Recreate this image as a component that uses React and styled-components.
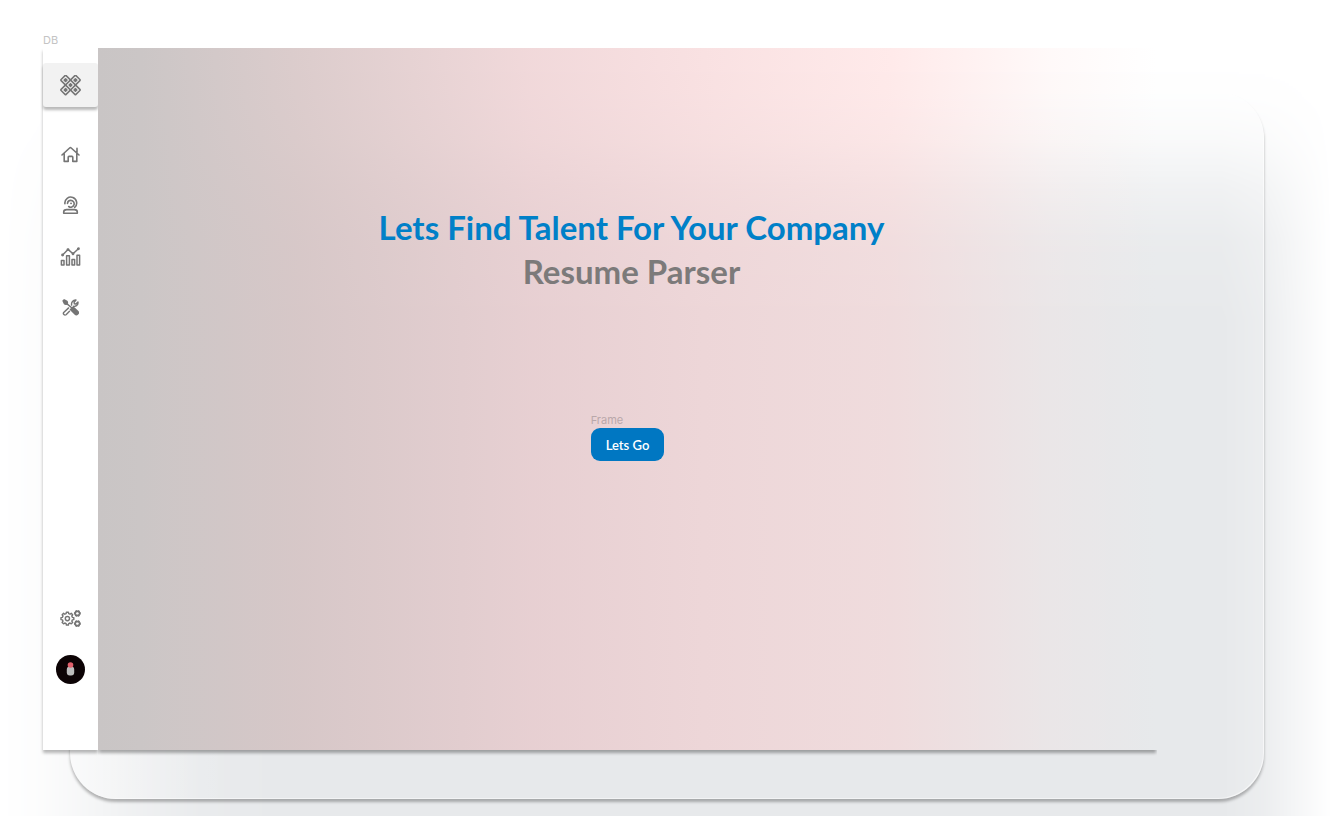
import React from "react";
import styled, { createGlobalStyle } from "styled-components";

const GlobalStyle = createGlobalStyle`
  *, *::before, *::after { box-sizing: border-box; }
  body { margin: 0; background: #fff; font-family: Lato, "Liberation Sans", sans-serif; }
`;

const Stage = styled.div`
  display: grid;
  grid-template: minmax(100vh, auto) / minmax(0, 1fr);
  overflow: hidden;
  & > * { grid-area: 1 / 1; isolation: isolate; }
`;

const Haze = styled.div`
  background: #e7e9eb;
  mask-image:
    linear-gradient(to right, transparent 0, rgba(0, 0, 0, 0.1) 36px, rgba(0, 0, 0, 0.34) 80px, rgba(0, 0, 0, 0.64) 130px, rgba(0, 0, 0, 0.9) 200px, #000 280px, #000 calc(100% - 110px), rgba(0, 0, 0, 0.8) calc(100% - 68px), rgba(0, 0, 0, 0.35) calc(100% - 30px), transparent 100%),
    linear-gradient(to bottom, transparent 60px, rgba(0, 0, 0, 0.07) 100px, rgba(0, 0, 0, 0.25) 140px, rgba(0, 0, 0, 0.62) 190px, rgba(0, 0, 0, 0.88) 240px, #000 320px);
  mask-composite: intersect;
`;

const GlassCard = styled.div`
  margin: 92px 68px 17px 70px;
  border-radius: 46px;
  background: linear-gradient(to right, rgba(255, 255, 255, 0.3), rgba(255, 255, 255, 0) 160px);
  box-shadow:
    0 3px 3px rgba(0, 0, 0, 0.28),
    inset -1px -1px 0 rgba(255, 255, 255, 0.5);
`;

const Screen = styled.div`
  display: flex;
  flex-direction: column;
  margin: 32px 175px 66px 43px;
`;

const FrameLabel = styled.span`
  font: 400 11px/16px Inter, sans-serif;
  color: ${(p) => p.$color};
`;

const Board = styled.div`
  flex: 1;
  display: flex;
`;

const Sidebar = styled.aside`
  flex: none;
  display: flex;
  flex-direction: column;
  width: 55px;
  padding: 15px 0 55px;
  background: #fff;
  box-shadow: 0 3px 3px rgba(0, 0, 0, 0.28);
`;

const Nav = styled.nav`
  display: flex;
  flex-direction: column;
  margin-top: ${(p) => (p.$end ? "auto" : "22px")};
`;

const IconButton = styled.button`
  display: flex;
  align-items: center;
  justify-content: center;
  width: 100%;
  height: 51px;
  padding: 0;
  border: 0;
  background: none;
  color: #757575;
  cursor: pointer;
`;

const LogoButton = styled(IconButton)`
  height: 44px;
  border-radius: 3px;
  background: #f2f2f2;
  box-shadow: 0 3px 3px rgba(0, 0, 0, 0.28);
`;

const Icon = styled.svg.attrs({ "aria-hidden": true })`
  display: block;
  fill: none;
  stroke: currentColor;
  stroke-width: ${(p) => p.$stroke || 1.6};
  stroke-linecap: round;
  stroke-linejoin: round;
`;

const Main = styled.main`
  flex: 1;
  display: flex;
  flex-direction: column;
  align-items: center;
  gap: 119px;
  padding: 157px 16px 48px;
  background: linear-gradient(
    to right,
    rgb(201, 197, 197) 0,
    rgb(203, 198, 198) 4%,
    rgba(210, 190, 190, 0.78) 19%,
    rgba(231, 189, 192, 0.58) 41%,
    rgba(243, 195, 197, 0.5) 57%,
    rgba(255, 195, 195, 0.35) 75%,
    rgba(255, 210, 208, 0.13) 90%,
    rgba(255, 255, 255, 0) 100%
  );
  box-shadow: 0 4px 3px -1px rgba(0, 0, 0, 0.32);
  clip-path: inset(0 0 -8px 0);
`;

const Heading = styled.h1`
  margin: 0;
  padding-left: 8px;
  font-size: 33px;
  line-height: 44px;
  font-weight: 700;
  text-align: center;
  color: #0080c8;
`;

const Product = styled.span`
  display: block;
  color: #7c7a7a;
`;

const Action = styled.div`
  display: flex;
  flex-direction: column;
  align-items: flex-start;
`;

const PrimaryButton = styled.button`
  height: 33px;
  padding: 0 15px;
  border: 0;
  border-radius: 9px;
  background: #0077c2;
  color: #fff;
  font: 600 13px/16px Lato, sans-serif;
  cursor: pointer;
`;

const LogoIcon = () => (
  <Icon width="21" height="21" viewBox="-11 -10.5 22 22" $stroke={1.6}>
    <g transform="rotate(45)">
      <rect x="-11" y="-3.7" width="22" height="7.4" rx=".8" />
      <rect x="-3.7" y="-11" width="7.4" height="22" rx=".8" />
      {[[0, 0], [7.3, 0], [-7.3, 0], [0, 7.3], [0, -7.3]].map(([x, y]) => (
        <rect key={`${x},${y}`} x={x - 1} y={y - 1} width="2" height="2" fill="currentColor" />
      ))}
    </g>
  </Icon>
);

const HomeIcon = () => (
  <Icon width="19" height="17" viewBox="0 0 19 17">
    <path d="M1 9 8.6 2a1.2 1.2 0 0 1 1.6 0l7.8 7M3.2 7.6v7.8h4v-4.2a.8.8 0 0 1 .8-.8h3a.8.8 0 0 1 .8.8v4.2h4V7.6M16 6.4V2.4" />
  </Icon>
);

const PersonIcon = () => (
  <Icon width="17" height="19" viewBox="0 0 17 19">
    <path d="M2.9 7.6A5.9 5.9 0 1 1 12.7 11.4M5.5 7.4C5.7 5.4 6.9 4.4 8.7 4.4a3.4 3.4 0 1 1-2 6.1M8.9 7.4h.3" />
    <path d="M1.7 17.2v-1.2c0-1.5 1.2-2.4 3-2.4h7.6c1.8 0 3 .9 3 2.4v1.2Z" />
  </Icon>
);

const ChartIcon = () => (
  <Icon width="21" height="21" viewBox="0 0 21 21" $stroke={1.5}>
    <path d="M1.4 14.6h2.6v4.4H1.4ZM6.6 9.8h2.8V19H6.6ZM12 13.4h2.6V19H12ZM17 9.2h2.6V19H17ZM2.6 9 8 3.4l5 4.4 5.4-5" />
    <g fill="currentColor">
      <circle cx="2.6" cy="9" r=".7" />
      <circle cx="8" cy="3.6" r=".7" />
      <circle cx="13" cy="7.8" r=".7" />
      <circle cx="18.4" cy="2.8" r=".7" />
    </g>
  </Icon>
);

const ToolsIcon = () => (
  <Icon width="17" height="17" viewBox="0 0 18 18" $stroke={1.5}>
    <path d="M10.2 6.4C9.6 3.5 11.7.9 14.8 1.1l-2 2.4.3 1.6 1.6.3 2.2-2.2c.4 2.8-1.8 5-4.6 4.5M7 9.4l-5.2 4.8a1.8 1.8 0 0 0 2.5 2.5l3.6-3.7" />
    <path d="M1.2 2 2.4.9l2.9 1.5.5 1.8-1.5 1.5-1.7-.6ZM10.2 10l1.6-1.6 4.8 4.7a2 2 0 0 1-2.9 2.9l-4.8-4.8Z" fill="currentColor" />
    <path d="m5 4.9 5.6 4.7" />
  </Icon>
);

const gearPath = (cx, cy, inner, outer, teeth) => {
  const step = (Math.PI * 2) / teeth;
  const points = [];
  for (let i = 0; i < teeth; i += 1) {
    [[-0.32, inner], [-0.2, outer], [0.2, outer], [0.32, inner]].forEach(([t, r]) => {
      const a = (i + t) * step;
      points.push(`${(cx + r * Math.cos(a)).toFixed(2)} ${(cy + r * Math.sin(a)).toFixed(2)}`);
    });
  }
  return `M${points.join("L")}Z`;
};

const GearsIcon = () => (
  <Icon width="21" height="17" viewBox="0 0 21 17" $stroke={1.4}>
    <path d={gearPath(7.4, 8.6, 5.1, 6.5, 8)} />
    <circle cx="7.4" cy="8.6" r="2.1" />
    <path d={gearPath(17.4, 3.4, 1.9, 2.8, 6)} />
    <path d={gearPath(17.4, 13.6, 1.9, 2.8, 6)} />
  </Icon>
);

const AvatarIcon = () => (
  <svg width="29" height="29" viewBox="0 0 29 29" aria-hidden="true">
    <circle cx="14.5" cy="14.5" r="14.5" fill="#0c0305" />
    <rect x="10.8" y="11.5" width="7.4" height="9" rx="3" fill="#bdbdbd" />
    <circle cx="14.5" cy="10" r="2.8" fill="#e2606c" />
  </svg>
);

const links = [
  ["Home", HomeIcon],
  ["Candidates", PersonIcon],
  ["Analytics", ChartIcon],
  ["Tools", ToolsIcon],
];

export default function App() {
  return (
    <>
      <GlobalStyle />
      <Stage>
        <Haze />
        <GlassCard />
        <Screen>
          <FrameLabel $color="#c4c4c4">DB</FrameLabel>
          <Board>
            <Sidebar>
              <LogoButton type="button" aria-label="Dashboard">
                <LogoIcon />
              </LogoButton>
              <Nav aria-label="Primary">
                {links.map(([label, Glyph]) => (
                  <IconButton key={label} type="button" aria-label={label}>
                    <Glyph />
                  </IconButton>
                ))}
              </Nav>
              <Nav $end aria-label="Account">
                <IconButton type="button" aria-label="Settings">
                  <GearsIcon />
                </IconButton>
                <IconButton type="button" aria-label="Profile">
                  <AvatarIcon />
                </IconButton>
              </Nav>
            </Sidebar>
            <Main>
              <Heading>
                Lets Find Talent For Your Company
                <Product>Resume Parser</Product>
              </Heading>
              <Action>
                <FrameLabel $color="#b9a8aa">Frame</FrameLabel>
                <PrimaryButton type="button">Lets Go</PrimaryButton>
              </Action>
            </Main>
          </Board>
        </Screen>
      </Stage>
    </>
  );
}
